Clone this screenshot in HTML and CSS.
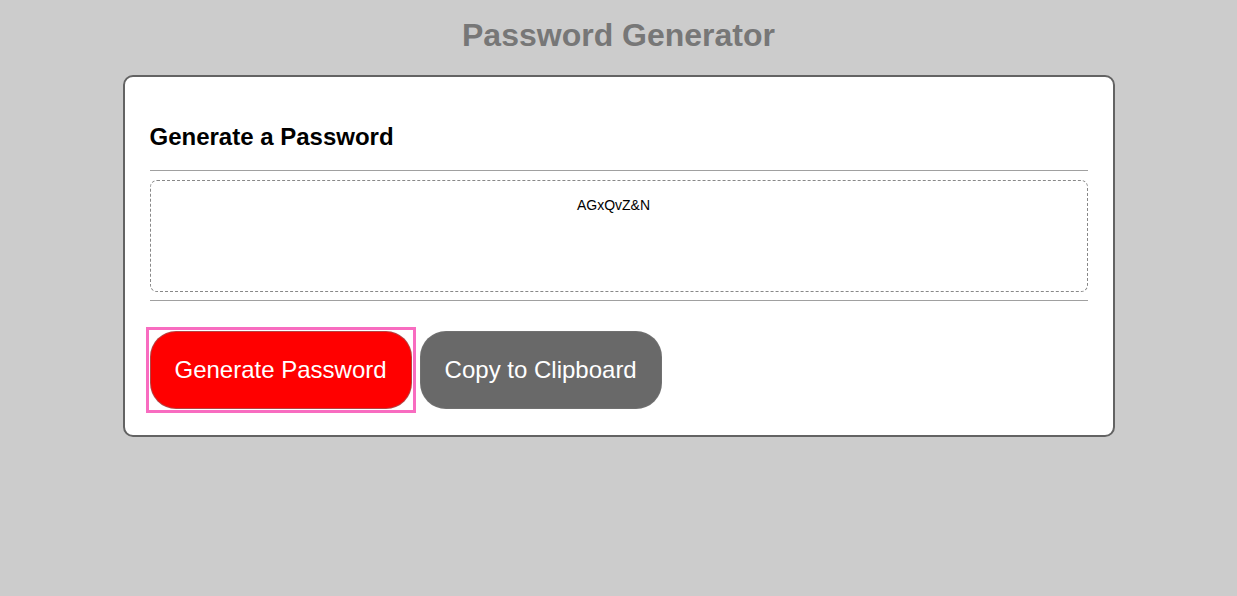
FILE: index.html
```html
<!DOCTYPE html>
<html lang="en">
<head>
<meta charset="utf-8">
<title>Password Generator</title>
<link rel="stylesheet" href="styles.css">
</head>
<body>
  <header class="page-header">
    <h1 class="page-title">Password Generator</h1>
  </header>
  <main class="card">
    <h2 class="card-title">Generate a Password</h2>
    <hr class="rule rule-top">
    <textarea class="password" readonly>AGxQvZ&amp;N</textarea>
    <hr class="rule rule-bottom">
    <div class="actions">
      <span class="focus-ring">
        <button class="btn btn-generate" type="button">Generate Password</button>
      </span>
      <button class="btn btn-copy" type="button">Copy to Clipboard</button>
    </div>
  </main>
</body>
</html>
```
FILE: styles.css
```css
html, body {
  margin: 0;
  padding: 0;
}

body {
  background: #cccccc;
  font-family: "Liberation Sans", Arial, Helvetica, sans-serif;
  color: #000;
}

.page-header {
  padding-top: 17px;
  text-align: center;
}

.page-title {
  margin: 0;
  font-size: 32px;
  line-height: 36px;
  font-weight: bold;
  color: #777777;
}

.card {
  box-sizing: border-box;
  width: 992px;
  margin: 22px auto 0;
  background: #ffffff;
  border: 2px solid #636363;
  border-radius: 10px;
  padding: 0 25px 26px;
}

.card-title {
  margin: 46px 0 19px;
  font-size: 24px;
  line-height: 28px;
  font-weight: bold;
}

.rule {
  border: 0;
  border-top: 1px solid #a0a0a0;
  height: 0;
  margin: 0;
}

.rule-top {
  margin-bottom: 9px;
}

.rule-bottom {
  margin-top: 8px;
  margin-bottom: 30px;
}

.password {
  display: block;
  box-sizing: border-box;
  width: 100%;
  height: 112px;
  margin: 0;
  padding: 16px 24px 15px 14px;
  border: 1px dashed #888888;
  border-radius: 7px;
  font-family: "Liberation Sans", Arial, Helvetica, sans-serif;
  font-size: 14px;
  line-height: 16px;
  text-align: center;
  color: #000;
  background: #fff;
  resize: none;
  outline: none;
}

.actions {
  display: flex;
  gap: 8px;
}

.focus-ring {
  display: flex;
  outline: 3px solid #f86cc0;
  outline-offset: 1px;
}

.btn {
  box-sizing: border-box;
  height: 78px;
  padding: 0 24px;
  border: 1px solid rgba(120, 120, 120, 0.55);
  border-radius: 26px;
  font-family: "Liberation Sans", Arial, Helvetica, sans-serif;
  font-size: 24px;
  color: #ffffff;
  cursor: pointer;
}

.btn-generate {
  background: #ff0000;
}

.btn-copy {
  background: #696969;
}
```
